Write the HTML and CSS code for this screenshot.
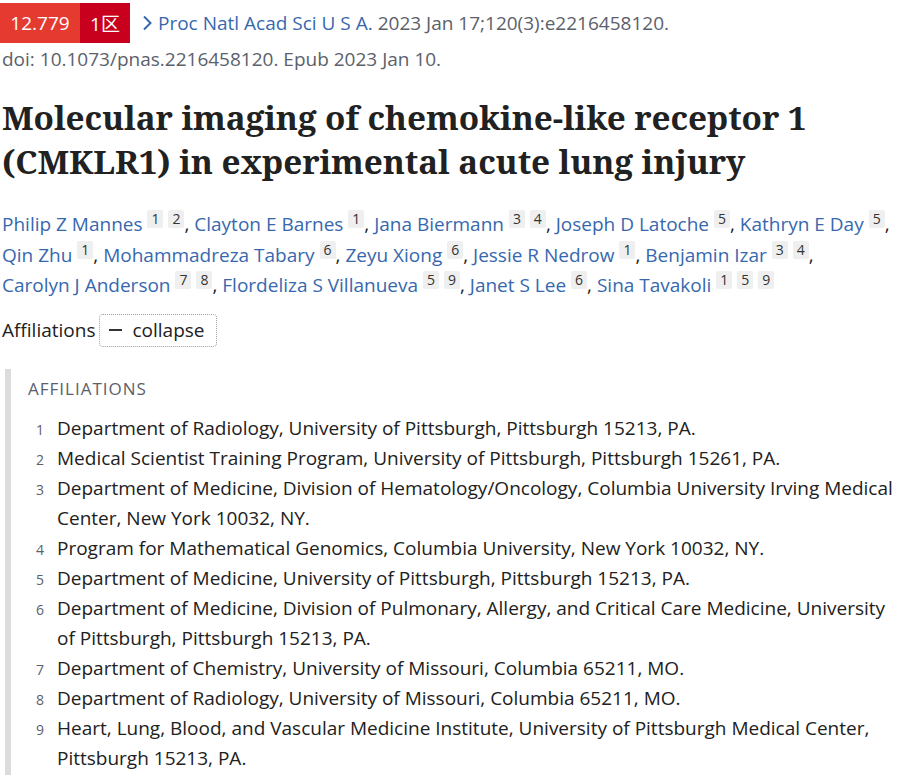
FILE: index.html
```html
<!DOCTYPE html>
<html lang="en">
<head>
<meta charset="utf-8">
<link rel="stylesheet" href="styles.css">
</head>
<body>
<main class="page">
  <div class="cite-row">
    <span class="badge"><span class="if">12.779</span><span class="zone">1区</span></span>
    <svg class="chev" width="10" height="16" viewBox="0 0 10 16"><path d="M2 1.5 L8.5 8 L2 14.5" fill="none" stroke="#3768ae" stroke-width="2"/></svg>
    <a class="journal">Proc Natl Acad Sci U S A.</a>
    <span class="cit">2023 Jan 17;120(3):e2216458120.</span>
  </div>
  <div class="doi">doi: 10.1073/pnas.2216458120. Epub 2023 Jan 10.</div>

  <h1 class="title">Molecular imaging of chemokine-like receptor 1 (CMKLR1) in experimental acute lung injury</h1>

  <div class="authors">
    <span class="au"><a class="author">Philip Z Mannes</a> <sup class="ref">1</sup> <sup class="ref">2</sup>,</span>
    <span class="au"><a class="author">Clayton E Barnes</a> <sup class="ref">1</sup>,</span>
    <span class="au"><a class="author">Jana Biermann</a> <sup class="ref">3</sup> <sup class="ref">4</sup>,</span>
    <span class="au"><a class="author">Joseph D Latoche</a> <sup class="ref">5</sup>,</span>
    <span class="au"><a class="author">Kathryn E Day</a> <sup class="ref">5</sup>,</span>
    <span class="au"><a class="author">Qin Zhu</a> <sup class="ref">1</sup>,</span>
    <span class="au"><a class="author">Mohammadreza Tabary</a> <sup class="ref">6</sup>,</span>
    <span class="au"><a class="author">Zeyu Xiong</a> <sup class="ref">6</sup>,</span>
    <span class="au"><a class="author">Jessie R Nedrow</a> <sup class="ref">1</sup>,</span>
    <span class="au"><a class="author">Benjamin Izar</a> <sup class="ref">3</sup> <sup class="ref">4</sup>,</span>
    <span class="au"><a class="author">Carolyn J Anderson</a> <sup class="ref">7</sup> <sup class="ref">8</sup>,</span>
    <span class="au"><a class="author">Flordeliza S Villanueva</a> <sup class="ref">5</sup> <sup class="ref">9</sup>,</span>
    <span class="au"><a class="author">Janet S Lee</a> <sup class="ref">6</sup>,</span>
    <span class="au"><a class="author">Sina Tavakoli</a> <sup class="ref">1</sup> <sup class="ref">5</sup> <sup class="ref">9</sup></span>
  </div>

  <div class="aff-toggle">
    <span>Affiliations</span>
    <button class="collapse"><span class="minus"></span>collapse</button>
  </div>

  <div class="aff-box">
    <h3 class="aff-title">Affiliations</h3>
    <ul class="aff-list">
      <li><span class="num">1</span><span class="txt">Department of Radiology, University of Pittsburgh, Pittsburgh 15213, PA.</span></li>
      <li><span class="num">2</span><span class="txt">Medical Scientist Training Program, University of Pittsburgh, Pittsburgh 15261, PA.</span></li>
      <li><span class="num">3</span><span class="txt">Department of Medicine, Division of Hematology/Oncology, Columbia University Irving Medical Center, New York 10032, NY.</span></li>
      <li><span class="num">4</span><span class="txt">Program for Mathematical Genomics, Columbia University, New York 10032, NY.</span></li>
      <li><span class="num">5</span><span class="txt">Department of Medicine, University of Pittsburgh, Pittsburgh 15213, PA.</span></li>
      <li><span class="num">6</span><span class="txt">Department of Medicine, Division of Pulmonary, Allergy, and Critical Care Medicine, University of Pittsburgh, Pittsburgh 15213, PA.</span></li>
      <li><span class="num">7</span><span class="txt">Department of Chemistry, University of Missouri, Columbia 65211, MO.</span></li>
      <li><span class="num">8</span><span class="txt">Department of Radiology, University of Missouri, Columbia 65211, MO.</span></li>
      <li><span class="num">9</span><span class="txt">Heart, Lung, Blood, and Vascular Medicine Institute, University of Pittsburgh Medical Center, Pittsburgh 15213, PA.</span></li>
    </ul>
  </div>
</main>
</body>
</html>
```
FILE: styles.css
```css
* { box-sizing: border-box; }
body {
  margin: 0;
  font-family: "Open Sans", "Noto Sans", sans-serif;
  font-size: 19px;
  color: #212121;
  background: #fff;
}
.page {
  padding-top: 3px;
}
.cite-row {
  display: flex;
  align-items: center;
  height: 40px;
  white-space: nowrap;
}
.badge {
  display: flex;
  height: 40px;
  color: #fff;
  font-size: 19px;
}
.badge .if {
  background: #e53a30;
  width: 80px;
  display: flex;
  align-items: center;
  justify-content: center;
}
.badge .zone {
  background: #c8001e;
  width: 50px;
  display: flex;
  align-items: center;
  justify-content: center;
  font-family: "Open Sans", "Noto Sans CJK SC", sans-serif;
}
.chev {
  margin: 0 6px 0 12px;
}
.journal {
  color: #3768ae;
  margin-right: 5px;
}
.cit, .doi {
  color: #5b616b;
}
.doi, .title, .authors, .aff-toggle {
  margin-left: 2px;
}
.doi {
  line-height: 30px;
  margin-top: 1px;
}
.title {
  font-family: "Noto Serif", "DejaVu Serif", serif;
  font-weight: 700;
  font-size: 33.3px;
  line-height: 44px;
  margin-top: 21px;
  margin-bottom: 0;
  margin-right: 0;
  color: #212121;
  max-width: 880px;
  letter-spacing: -0.1px;
}
.authors {
  margin-top: 26px;
  line-height: 30.5px;
  color: #212121;
  max-width: 895px;
}
.au {
  white-space: nowrap;
}
.author {
  color: #3768ae;
}
.ref {
  display: inline-block;
  background: #efefef;
  color: #333;
  font-size: 14px;
  line-height: 18px;
  padding: 0 4px;
  border-radius: 2px;
  vertical-align: 7px;
}
.aff-toggle {
  display: flex;
  align-items: center;
  gap: 4px;
  margin-top: 13px;
}
.collapse {
  font: inherit;
  color: #212121;
  background: #fff;
  border: 1.5px dotted #a0a0a0;
  border-radius: 4px;
  height: 33px;
  padding: 0 12px 0 9px;
  display: flex;
  align-items: center;
  gap: 10px;
}
.minus {
  display: inline-block;
  width: 13px;
  height: 2px;
  background: #333;
}
.aff-box {
  margin: 22px 0 0 5px;
  border-left: 6px solid #dcdcdc;
  padding: 6px 0 6px 17px;
}
.aff-title {
  margin: 0 0 10px;
  font-weight: 400;
  font-size: 17px;
  text-transform: uppercase;
  color: #5b616b;
  letter-spacing: 1px;
  line-height: 28px;
}
.aff-list {
  list-style: none;
  margin: 0;
  padding: 0;
}
.aff-list li {
  display: flex;
  align-items: baseline;
  line-height: 30px;
}
.aff-list .num {
  flex: none;
  width: 29px;
  padding-right: 13px;
  text-align: right;
  font-size: 14px;
  line-height: 14px;
  color: #5b616b;
}
.aff-list .txt {
  flex: 1;
  padding-right: 8px;
}
```
